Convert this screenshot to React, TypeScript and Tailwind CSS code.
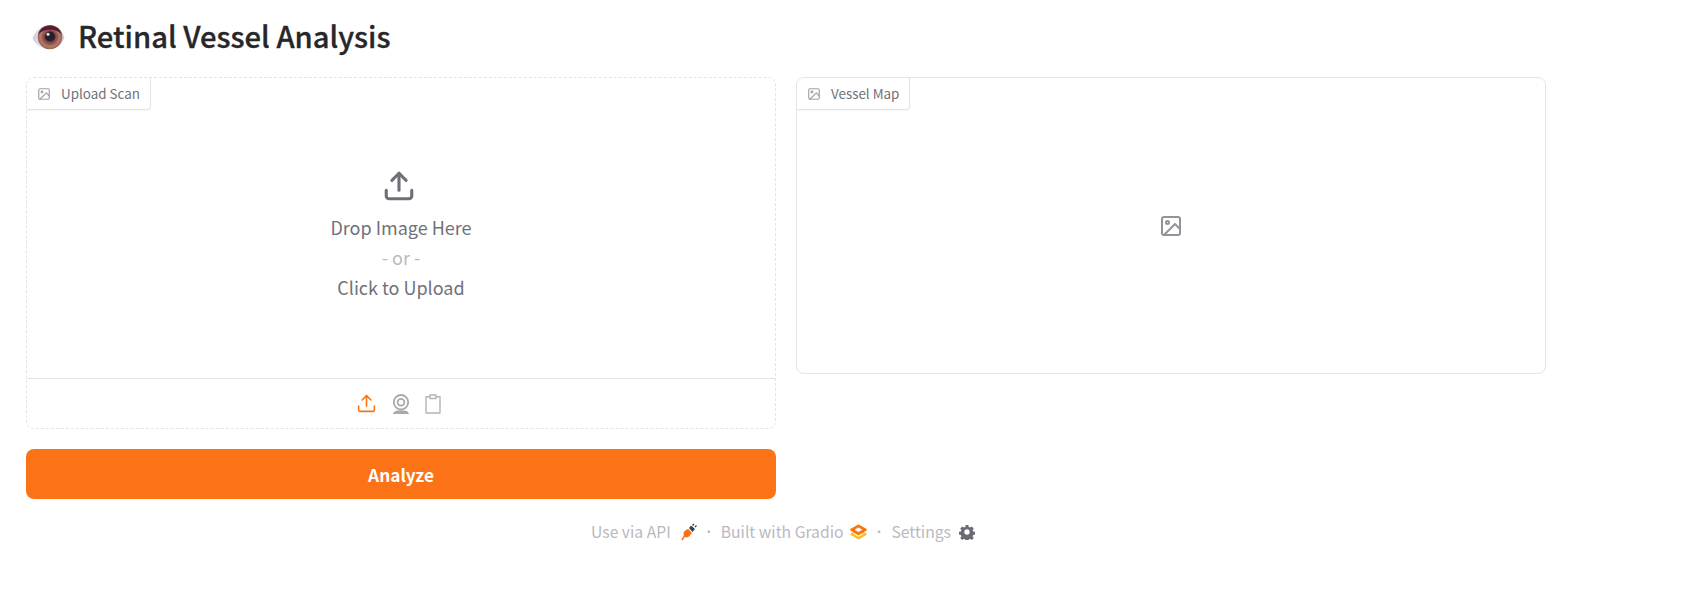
function ImageIcon({ className }: { className: string }) {
  return (
    <svg className={className} viewBox="0 0 24 24" fill="none" stroke="currentColor" strokeWidth="2" strokeLinecap="round" strokeLinejoin="round">
      <rect x="3" y="3" width="18" height="18" rx="2" ry="2" />
      <circle cx="8.5" cy="8.5" r="1.5" />
      <polyline points="21 15 16 10 5 21" />
    </svg>
  );
}
function UploadIcon({ className, sw = 2 }: { className: string; sw?: number }) {
  return (
    <svg className={className} viewBox="0 0 24 24" fill="none" stroke="currentColor" strokeWidth={sw} strokeLinecap="round" strokeLinejoin="round">
      <path d="M21 15v4a2 2 0 0 1-2 2H5a2 2 0 0 1-2-2v-4" />
      <polyline points="17 8 12 3 7 8" />
      <line x1="12" y1="3" x2="12" y2="15" />
    </svg>
  );
}
function Label({ text }: { text: string }) {
  return (
    <div className="absolute left-0 top-0 flex h-[32px] items-center gap-[10px] rounded-tl-[7px] rounded-br-[4px] border-r border-b border-[#e4e4e7] bg-white pl-[10px] pr-[10px] text-[13.4px] leading-none text-[#71717a] shadow-[0_1px_1px_rgba(0,0,0,0.04)]">
      <ImageIcon className="h-[14px] w-[14px] text-[#a1a1aa]" />
      <span>{text}</span>
    </div>
  );
}
function Eye() {
  return (
    <svg className="ml-[6px] h-[26px] w-[33px]" viewBox="0 0 33 26">
      <defs>
        <linearGradient id="w" x1="0" y1="0" x2="1" y2="0">
          <stop offset="0" stopColor="#cfc9de" />
          <stop offset="0.4" stopColor="#f2eef6" />
          <stop offset="1" stopColor="#d3cee0" />
        </linearGradient>
        <radialGradient id="i" cx="50%" cy="50%" r="50%">
          <stop offset="0.42" stopColor="#7a3a45" />
          <stop offset="0.78" stopColor="#b57a64" />
          <stop offset="1" stopColor="#96604f" />
        </radialGradient>
        <clipPath id="c">
          <path d="M0.5 14 C4 6 10 1 18 1 C26 1 31 8 32.5 13.5 C30 20 25 25.5 17 25.5 C9 25.5 3 20 0.5 14 Z" />
        </clipPath>
      </defs>
      <path d="M0.5 14 C4 6 10 1 18 1 C26 1 31 8 32.5 13.5 C30 20 25 25.5 17 25.5 C9 25.5 3 20 0.5 14 Z" fill="url(#w)" />
      <g clipPath="url(#c)">
        <circle cx="18" cy="13" r="12.3" fill="url(#i)" />
        <path d="M6 11 A12.3 12.3 0 0 1 30 11 C25 4 11 4 6 11 Z" fill="#571c33" />
      </g>
      <circle cx="18" cy="12.5" r="5" fill="#26202c" />
      <circle cx="16" cy="10.2" r="1.5" fill="#f4e3e6" />
    </svg>
  );
}
function Webcam() {
  return (
    <svg className="h-[20px] w-[18px] text-[#a8a8ad]" viewBox="0 0 18 20" fill="none" stroke="currentColor" strokeWidth="1.8">
      <circle cx="9" cy="8.2" r="7.2" />
      <circle cx="9" cy="8.2" r="3.4" />
      <path d="M2.5 19 C4 16.5 14 16.5 15.5 19 Z" fill="currentColor" />
    </svg>
  );
}
function Clipboard() {
  return (
    <svg className="h-[20px] w-[16px] text-[#b4b4b8]" viewBox="0 0 16 20" fill="none" stroke="currentColor" strokeWidth="1.4" strokeLinejoin="round">
      <path d="M5 2.8 H1 V19 H15 V2.8 H11" />
      <path d="M5 1 H11 V4.5 H5 Z" />
    </svg>
  );
}
function ApiIcon() {
  return (
    <svg className="h-[18px] w-[16px]" viewBox="0 0 16 18">
      <path d="M8 5 L10 2.5 L14 6 L11.5 9 Z" fill="#374151" />
      <path d="M11.5 2.5 L13 1 M14 4 L15.5 2.5" stroke="#374151" strokeWidth="1.3" />
      <path d="M3 8.5 L7 5.8 L11 10 L8 13.5 C6 15 4 14.5 3 13 C2.4 11.5 2.4 10 3 8.5 Z" fill="#f97316" />
      <path d="M3.5 13 L1 17" stroke="#f97316" strokeWidth="1.5" />
    </svg>
  );
}
function GradioIcon() {
  return (
    <svg className="h-[16px] w-[17px]" viewBox="0 0 17 16" fill="none" strokeLinejoin="round">
      <path d="M8.5 0.5 L16.5 5 V6.5 L13.5 8 L16.5 9.5 V11 L8.5 15.5 L0.5 11 V9.5 L3.5 8 L0.5 6.5 V5 Z" fill="#fbbf24" />
      <path d="M8.5 0.5 L16.5 5 V6.5 L8.5 11 L0.5 6.5 V5 Z" fill="#f97316" />
      <path d="M5 5.8 L8.5 3.8 L12 5.8 L8.5 7.8 Z" fill="#fff" stroke="#fff" strokeWidth="0.5" />
      <path d="M3.6 9.4 L8.5 12.2 L13.4 9.4" stroke="#fff" strokeWidth="1" />
    </svg>
  );
}
function Gear() {
  return (
    <svg className="h-[16px] w-[16px] text-[#6b6b73]" viewBox="0 0 24 24" fill="currentColor">
      <path fillRule="evenodd" d="M10 1.5h4l.6 3 2 .9 2.6-1.7 2.9 2.9-1.7 2.6.9 2 3 .6v4l-3 .6-.9 2 1.7 2.6-2.9 2.9-2.6-1.7-2 .9-.6 3h-4l-.6-3-2-.9-2.6 1.7-2.9-2.9 1.7-2.6-.9-2-3-.6v-4l3-.6.9-2-1.7-2.6 2.9-2.9 2.6 1.7 2-.9zM12 8a4 4 0 1 0 0 8 4 4 0 0 0 0-8z" />
    </svg>
  );
}
export default function App() {
  return (
    <div className="min-h-[590px] bg-white px-[26px] pt-[16px] [font-family:'Noto_Sans_CJK_SC','Noto_Sans',sans-serif]">
      <div className="flex h-[41px] w-[1520px] items-center gap-[13px] text-[29.2px] font-medium leading-none text-[#27272a] [-webkit-text-stroke:0.3px_#27272a]">
        <Eye />
        <h1 className="-mt-[1px]">Retinal Vessel Analysis</h1>
      </div>
      <div className="mt-[20px] flex w-[1520px] items-start gap-[20px]">
        <div className="flex w-[750px] flex-col gap-[20px]">
          <div className="relative flex h-[352px] flex-col rounded-[8px] border border-dashed border-[#e4e4e7]">
            <Label text="Upload Scan" />
            <div className="flex h-[301px] flex-col items-center justify-start border-b border-[#e4e4e7] pt-[91px] text-[#71717a]">
              <UploadIcon className="mr-[4px] h-[34px] w-[34px] text-[#6f6f78]" sw={2.2} />
              <div className="mt-[9px] text-[18px] leading-[30px]">Drop Image Here</div>
              <div className="text-[18px] leading-[30px] text-[#b9b9bf]">- or -</div>
              <div className="text-[18px] leading-[30px]">Click to Upload</div>
            </div>
            <div className="flex flex-1 items-center justify-center gap-[15px] pr-[6px]">
              <UploadIcon className="h-[21px] w-[21px] text-[#f97316]" sw={1.8} />
              <Webcam />
              <Clipboard />
            </div>
          </div>
          <button className="flex h-[50px] items-center justify-center rounded-[8px] bg-[#fb7316] pt-[1px] text-[17.3px] font-semibold text-white">Analyze</button>
        </div>
        <div className="relative flex h-[297px] w-[750px] items-center justify-center rounded-[8px] border border-[#e4e4e7]">
          <Label text="Vessel Map" />
          <ImageIcon className="h-[24px] w-[24px] text-[#93939a]" />
        </div>
      </div>
      <div className="mt-[22px] flex h-[22px] w-[1514px] items-center justify-center text-[15.7px] text-[#b9b9c0]">
        <span>Use via API</span>
        <span className="ml-[10px]"><ApiIcon /></span>
        <span className="mx-[9px] flex w-[6px] justify-center text-[12px]">·</span>
        <span>Built with Gradio</span>
        <span className="ml-[6px]"><GradioIcon /></span>
        <span className="mx-[9px] flex w-[7px] justify-center text-[12px]">·</span>
        <span>Settings</span>
        <span className="ml-[8px]"><Gear /></span>
      </div>
    </div>
  );
}
